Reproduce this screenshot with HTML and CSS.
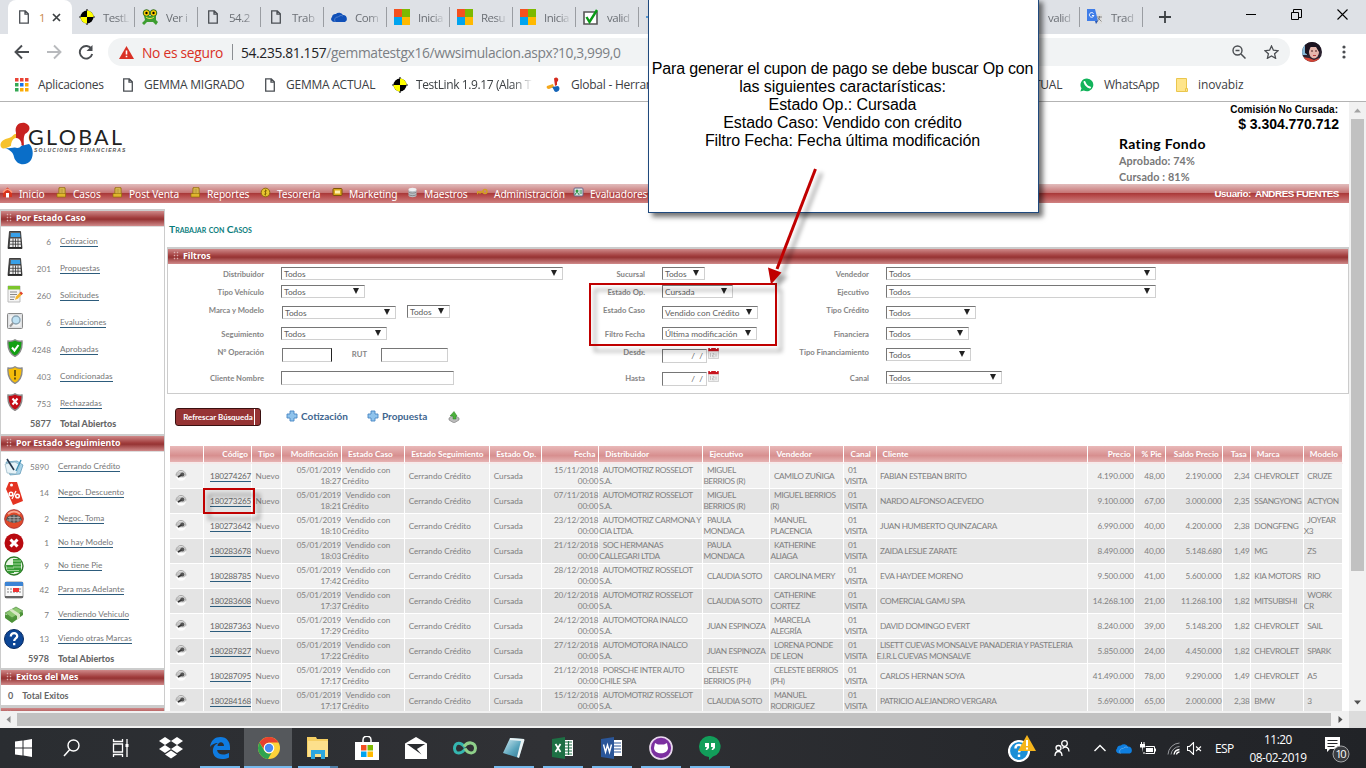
FILE: index.html
```html
<!DOCTYPE html>
<html lang="es">
<head>
<meta charset="utf-8">
<title>Trabajar con Casos</title>
<link rel="stylesheet" href="styles.css">
</head>
<body>
<svg class="defs" width="0" height="0">
<defs>
<linearGradient id="gBtn" x1="0" y1="0" x2="0" y2="1"><stop offset="0" stop-color="#666"/><stop offset="1" stop-color="#222"/></linearGradient>
<linearGradient id="gPad" x1="0" y1="0" x2="1" y2="1"><stop offset="0" stop-color="#d8eef5"/><stop offset=".55" stop-color="#5aa5bd"/><stop offset="1" stop-color="#2b6f8c"/></linearGradient>
<radialGradient id="gRed"><stop offset="0" stop-color="#f33"/><stop offset="1" stop-color="#a00"/></radialGradient>
</defs>
<symbol id="doc" viewBox="0 0 12 14"><path d="M1.7.8h5.6l3 3v9.4H1.7zM7 1v3.2h3.2" fill="none" stroke="#4b4f54" stroke-width="1.3"/></symbol>
<symbol id="target" viewBox="0 0 16 16"><path d="M8 0v16M0 8h16" stroke="#222" stroke-width="1.2"/><circle cx="8" cy="8" r="6.500" fill="#000"/><path d="M8 8V1.500A6.500 6.500 0 0 1 14.500 8zM8 8v6.500A6.500 6.500 0 0 1 1.500 8z" fill="#ff0"/></symbol>
<symbol id="ms" viewBox="0 0 15 15"><path d="M0 0h7.5v7.5H0z" fill="#f4511e"/><path d="M7.5 0H15v7.5H7.5z" fill="#7db900"/><path d="M0 7.5h7.5V15H0z" fill="#00a4ef"/><path d="M7.5 7.5H15V15H7.5z" fill="#ffb900"/></symbol>
<symbol id="cloud" viewBox="0 0 16 11"><path d="M3.4 10.5A3 3 0 0 1 1 5.4 3.6 3.6 0 0 1 4.8 2.6 4.6 4.6 0 0 1 12 3.4a3.6 3.6 0 0 1 3.8 3.9 2.9 2.9 0 0 1-2 3.2z"/><path d="M4.4 10.7C2.5 7.8 4.6 5 7.2 5.6c1-1.6 3-2 4.6-1" fill="none" stroke="#fff" stroke-opacity=".45" stroke-width=".6"/></symbol>
<symbol id="calc" viewBox="0 0 16 18"><path d="M2.500.5h11l1.500 17H1z" fill="url(#gBtn)" stroke="#222" stroke-width=".8"/><path d="M4 2h9l.3 4H3.600z" fill="#38a0e8"/><path d="M3.200 7.500h10.200l.6 8.500H2.600z" fill="#eee"/><path d="M3 10.300h11M3 13.200h11M6 7.500V16M8.500 7.500V16M11 7.500V16" stroke="#333" stroke-width=".8"/></symbol>
<symbol id="shield" viewBox="0 0 16 18"><path d="M8 .8c2 1.4 4.500 1.600 7 1.200.5 6-.8 12-7 15.400C1.800 14 .5 8 1 2c2.500.4 5 .2 7-1.200z" stroke="#8a8a8a" stroke-width="1.400"/></symbol>
<symbol id="sheet" viewBox="0 0 11 11"><path d="M3 .8h6v8H3z" fill="#f3d566" stroke="#94700c"/><path d="M1 6.500h8.500V10H1z" fill="#e0b52c" stroke="#94700c" stroke-width=".7"/><path d="M4.200 3h3.500M4.200 5h3.500" stroke="#84600c" stroke-width=".8"/></symbol>
<symbol id="lens" viewBox="0 0 12 12"><circle cx="6" cy="6.500" r="5.200" fill="#fff" opacity=".9"/><path d="M1 7a5 4.500 0 0 1 10 0l-2 1.500H3z" fill="#c4c4c4"/><path d="M1 6.500a5 5 0 0 1 10 0" fill="none" stroke="#999" stroke-width=".9"/><circle cx="7.300" cy="5.500" r="2" fill="#555"/><path d="M6.500 6 3 8" stroke="#333" stroke-width="1.600"/></symbol>
<symbol id="plus" viewBox="0 0 12 12"><path d="M4 1h4v3h3v4H8v3H4V8H1V4h3z" fill="#8fc3ec" stroke="#4786c4" stroke-width=".9"/></symbol>
<symbol id="cal" viewBox="0 0 11 12"><path d="M.5 2h10v9.500H.5z" fill="#eee" stroke="#bbb" stroke-width=".6"/><path d="M.3 1h10.400v3.200H.3z" fill="#c8141e"/><path d="M2.500 0v2M8.500 0v2" stroke="#fff" stroke-width="1.300"/><path d="M2.500 6v4M4.500 6.500h1.500v1.500H4.500v1.800h2M8 6.500v3.300" fill="none" stroke="#aaa" stroke-width=".6"/></symbol>
<symbol id="gl" viewBox="0 0 36 46"><path d="M9 17c-6 1-10 5-8 9 3 4 8-1 13-2l3-11c-3-1-4 3-8 4z" fill="#f6c22c"/><path d="M16 12C14 4 20 1 25 2c6 2 6 8 0 11-2 4-1 8-1 13l-8-6z" fill="#c8221f"/><path d="M5 27c8 1 14-2 24-4 4 3 5 11 2 16-5 7-15 5-17-3-1-5-4-7-9-9z" fill="#0a6ec8"/><path d="M11 25c0-6 4-10 8-7 4 4 3 9-2 9z" fill="#fff"/></symbol>
</svg>
<div class="screen">
  <header class="tabs">
    <div class="tab active"><svg class="ic12"><use href="#doc"/></svg><span class="orange">1</span><svg width="9" height="9" viewBox="0 0 9 9"><path d="M1 1l7 7M8 1L1 8" stroke="#3c4043" stroke-width="1.700"/></svg></div>
    <div class="tab"><svg class="ic16"><use href="#target"/></svg><span class="tt">TestL</span></div>
    <div class="tab"><svg class="ic16" viewBox="0 0 16 16"><circle cx="4.500" cy="4" r="3.300" fill="#fc0" stroke="#286b22"/><circle cx="11.500" cy="4" r="3.300" fill="#fc0" stroke="#286b22"/><path d="M2 7h12v4l2 2-2 3-3-3H5l-3 3-2-2 3-3z" fill="#3d9d2f"/><circle cx="4.500" cy="4" r="1.200"/><circle cx="11.500" cy="4" r="1.200"/><path d="M4 8c2 2 6 2 8 0" stroke="#efe64b" fill="none"/></svg><span class="tt">Ver i</span></div>
    <div class="tab"><svg class="ic12"><use href="#doc"/></svg><span class="tt">54.2</span></div>
    <div class="tab"><svg class="ic12"><use href="#doc"/></svg><span class="tt">Trab</span></div>
    <div class="tab"><svg class="ic16" viewBox="0 0 16 16" fill="#1050b8"><use href="#cloud" y="2.500" width="16" height="11"/></svg><span class="tt">Com</span></div>
    <div class="tab"><svg class="ic16"><use href="#ms"/></svg><span class="tt">Inicia</span></div>
    <div class="tab"><svg class="ic16"><use href="#ms"/></svg><span class="tt">Resu</span></div>
    <div class="tab"><svg class="ic16"><use href="#ms"/></svg><span class="tt">Inicia</span></div>
    <div class="tab"><svg class="ic16" viewBox="0 0 16 16"><path d="M1 3h13v12H1z" fill="#fff" stroke="#555" stroke-width="1.600"/><path d="M3.500 8l3 5L14 1" fill="none" stroke="#0a9a16" stroke-width="2.400"/></svg><span class="tt">valid</span></div>
    <div class="tab gap"><i></i></div>
    <div class="tab"><span class="tt lone">valid</span></div>
    <div class="tab"><svg class="ic16" viewBox="0 0 16 16"><path d="M6 5h9v10H8z" fill="#ddd"/><path d="M0 0h8l3 12H0z" fill="#3f7de8"/><path d="M8 12h3l-2 3z" fill="#2456b8"/><path d="M6.500 4.500a2.300 2.300 0 1 0 .4 2H5" fill="none" stroke="#fff"/><path d="M10 8h5M12.500 7v1c0 2-1 3.500-2.500 4.500M11 9l3.500 3.500" fill="none" stroke="#777" stroke-width=".8"/></svg><span class="tt">Trad</span></div>
    <svg class="newtab" width="12" height="12"><path d="M6 0v12M0 6h12" stroke="#3c4043" stroke-width="1.800"/></svg>
    <div class="winbtns">
      <svg width="10" height="11"><path d="M0 5.500h10" stroke="#000"/></svg>
      <svg width="11" height="11"><path d="M.5 3.500h7v7h-7zM2.500 3V.5h8v8H8" fill="none" stroke="#000"/></svg>
      <svg width="11" height="11"><path d="M.5.500l10 10M10.500.5l-10 10" stroke="#000" stroke-width="1.100"/></svg>
    </div>
  </header>
  <div class="toolbar">
    <svg width="16" height="16" viewBox="0 0 16 16"><path d="M15 8H2M8 1.500L1.500 8 8 14.500" fill="none" stroke="#4a4d51" stroke-width="1.900"/></svg>
    <svg width="16" height="16" viewBox="0 0 16 16"><path d="M1 8h13M8 1.500L14.500 8 8 14.500" fill="none" stroke="#b8babd" stroke-width="1.900"/></svg>
    <svg width="16" height="16" viewBox="0 0 16 16"><path d="M13.500 5A6.300 6.300 0 1 0 14.200 10" fill="none" stroke="#4a4d51" stroke-width="1.900"/><path d="M14.500 1v6h-6z" fill="#4a4d51"/></svg>
    <div class="omni">
      <svg width="15" height="13" viewBox="0 0 15 13"><path d="M7.500 0L15 13H0z" fill="#d93025"/><path d="M7.500 4.500v4M7.500 9.700v1.600" stroke="#fff" stroke-width="1.600"/></svg>
      <span class="insecure">No es seguro</span><i class="bar"></i><span class="url"><b>54.235.81.157</b>/gemmatestgx16/wwsimulacion.aspx?10,3,999,0</span>
      <svg class="mag" width="14" height="14" viewBox="0 0 14 14"><circle cx="5.500" cy="5.500" r="4.500" fill="none" stroke="#4a4d51" stroke-width="1.400"/><path d="M3.500 5.500h4M9 9l4.500 4.500" stroke="#4a4d51" stroke-width="1.500"/></svg>
      <svg width="15" height="14" viewBox="0 0 15 14"><path d="M7.500 1l1.900 4.200 4.600.5-3.400 3.100 1 4.500-4.100-2.300-4.100 2.300 1-4.500L1 5.700l4.600-.5z" fill="none" stroke="#4a4d51" stroke-width="1.300"/></svg>
    </div>
    <svg class="face" width="20" height="20" viewBox="0 0 20 20"><clipPath id="fc"><circle cx="10" cy="10" r="10"/></clipPath><g clip-path="url(#fc)"><path d="M0 0h20v20H0z" fill="#2b2230"/><path d="M0 0h5v13H0z" fill="#86b8d6"/><ellipse cx="12" cy="10" rx="5" ry="6.500" fill="#e6b6ac"/><path d="M3 0h14l2 8-2 2-3-5-6 0-2 8-3-2z" fill="#1c1420"/><path d="M0 15l7 1 5 2 5-2 1 5H0z" fill="#d34536"/><path d="M9 9h2M13 9h2" stroke="#4a2020"/><path d="M11 13.500h3" stroke="#b83c40"/></g></svg>
    <svg class="dots" width="4" height="14"><g fill="#4a4d51"><circle cx="2" cy="2" r="1.600"/><circle cx="2" cy="7" r="1.600"/><circle cx="2" cy="12" r="1.600"/></g></svg>
  </div>
  <nav class="bookmarks">
    <span><svg width="14" height="14"><g><path d="M0 0h3.500v3.500H0zM5 0h3.500v3.500H5zM10 0h3.500v3.500H10z" fill="#ea4335"/><path d="M0 5h3.500v3.500H0z" fill="#34a853"/><path d="M5 5h3.500v3.500H5z" fill="#1a73e8"/><path d="M10 5h3.500v3.500H10zM5 10h3.500v3.500H5zM10 10h3.500v3.500H10z" fill="#fbab05"/><path d="M0 10h3.500v3.500H0z" fill="#34a853"/></g></svg>Aplicaciones</span>
    <span><svg class="ic12"><use href="#doc"/></svg>GEMMA MIGRADO</span>
    <span><svg class="ic12"><use href="#doc"/></svg>GEMMA ACTUAL</span>
    <span class="fade"><svg class="ic16"><use href="#target"/></svg>TestLink 1.9.17 (Alan T</span>
    <span><svg width="15" height="16" viewBox="0 0 15 16"><path d="M8 1.500c3-3 6 1 3 3.500v3L9 9z" fill="#d52b1e"/><path d="M1 9l6-2 1 3-5 2C1 12 0 10 1 9z" fill="#f5a81c"/><path d="M6 10l6-1c3 2 1 6-2 6-2 0-2-3-4-5z" fill="#1565b8"/></svg>Global - Herramientas</span>
    <span class="right">GEMMA ACTUAL</span>
    <span><svg width="14" height="14" viewBox="0 0 14 14"><path d="M7 .5a6.400 6.400 0 1 1-3.200 12L.4 13.600l1.100-3.300A6.400 6.400 0 0 1 7 .5z" fill="#12b35b"/><path d="M4.500 4c1 3 2.500 4.800 5.500 5.500" stroke="#fff" stroke-width="2" fill="none" stroke-linecap="round"/></svg>WhatsApp</span>
    <span class="ino"><svg width="12" height="14"><path d="M.5.5h10v13H.5z" fill="#ffe58a" stroke="#eac64d"/><path d="M9.500 10.500h2v3h-2z" fill="#ffe58a" stroke="#eac64d"/></svg>inovabiz</span>
  </nav>
  <div class="view">
    <main class="page">
      <div class="banner">
        <div class="logo"><svg width="36" height="46"><use href="#gl"/></svg><div><div class="brand">GLOBAL</div><div class="sub">SOLUCIONES FINANCIERAS</div></div></div>
        <div class="figures"><div class="com">Comisión No Cursada:</div><div class="amt">$ 3.304.770.712</div><div class="rating"><h2>Rating Fondo</h2><p>Aprobado: 74%</p><p>Cursado : 81%</p></div></div>
      </div>
      <nav class="menu">
        <span><svg class="mi" viewBox="0 0 11 11"><path d="M1 5l4.500-4.500L10 5v5H1z" fill="#d8341c"/><path d="M1 5.500Q5.500-1 10 5.500" stroke="#ff9c80" stroke-width="1.500" fill="none"/><path d="M4 6h3v4.500H4z" fill="#fff"/></svg>Inicio</span>
        <span><svg class="mi"><use href="#sheet"/></svg>Casos</span>
        <span><svg class="mi"><use href="#sheet"/></svg>Post Venta</span>
        <span><svg class="mi"><use href="#sheet"/></svg>Reportes</span>
        <span><svg class="mi" viewBox="0 0 11 11"><circle cx="5.500" cy="5.500" r="4.300" fill="#e7c52f" stroke="#8d6c10"/><path d="M7 4c-2-1.200-3 .8-1.500 1.500S5.500 8 4 7M5.500 2.500v6" fill="none" stroke="#7a5c08" stroke-width=".8"/></svg>Tesorería</span>
        <span><svg class="mi" viewBox="0 0 11 11"><rect x="1" y="1.500" width="9" height="7" rx="1" fill="#d9a91c" stroke="#7c5508"/><path d="M3 3.500h5v3H3z" fill="#fff1b0"/></svg>Marketing</span>
        <span><svg class="mi" viewBox="0 0 11 11"><path d="M1.500 2.500v6c0 2.300 8 2.300 8 0v-6z" fill="#b9bfc4"/><ellipse cx="5.500" cy="2.500" rx="4" ry="1.700" fill="#eef0f2"/><path d="M1.500 5c1 1.500 7 1.500 8 0M1.500 7.500c1 1.500 7 1.500 8 0" stroke="#666" fill="none" stroke-width=".6"/></svg>Maestros</span>
        <span><svg class="mi" viewBox="0 0 11 11"><circle cx="8" cy="4.500" r="2" fill="none" stroke="#d2a020" stroke-width="1.500"/><path d="M6 5H.5v2.200M3 5v1.800" stroke="#d2a020" stroke-width="1.400" fill="none"/></svg>Administración</span>
        <span><svg class="mi" viewBox="0 0 11 11"><rect x="1" y="1" width="9" height="8" rx="1" fill="#dce6e4" stroke="#668"/><circle cx="4" cy="4" r="1.500" fill="#2e9c40"/><path d="M2 8c0-3 4-3 4 0M6.500 4H9M6.500 6H9" stroke="#2e8c50" fill="none"/></svg>Evaluadores</span>
        <b>Usuario:&nbsp; ANDRES FUENTES</b>
      </nav>
      <div class="cols">
        <aside>
          <section class="box"><h3>Por Estado Caso</h3>
            <ul class="caso">
              <li><svg class="s"><use href="#calc"/></svg><em>6</em><a>Cotizacion</a></li>
              <li><svg class="s"><use href="#calc"/></svg><em>201</em><a>Propuestas</a></li>
              <li><svg class="s" viewBox="0 0 16 18"><path d="M1 1h12v16H1z" fill="#f4f4f4" stroke="#bbb"/><path d="M1 1h12v3.500H1z" fill="#7cc52c"/><path d="M3 7h7M3 9.500h7M3 12h5M3 14.500h4" stroke="#8a8a8a"/><path d="M8 15l1-3.500 4-4 2 2-4 4z" fill="#f4b52c"/><path d="M12.500 8l1.500-1.500 2 2-1.500 1.500z" fill="#e0402c"/></svg><em>260</em><a>Solicitudes</a></li>
              <li><svg class="s" viewBox="0 0 16 18"><rect x=".5" y="1.500" width="15" height="15" rx="1" fill="#dfe1e3" stroke="#888"/><path d="M2.500 3.500h11v11h-11z" fill="#f3f3f3"/><circle cx="9" cy="8" r="4" fill="#bfe2f4" stroke="#8aa4b4" stroke-width="1.400"/><path d="M6 11l-3 3.500" stroke="#999" stroke-width="2"/></svg><em>6</em><a>Evaluaciones</a></li>
              <li><svg class="s" fill="#12a012"><use href="#shield"/><path d="M5 8.500l2.500 3L11.500 6" fill="none" stroke="#fff" stroke-width="2"/></svg><em>4248</em><a>Aprobadas</a></li>
              <li><svg class="s" fill="#f5bd0a"><use href="#shield"/><path d="M8 4v6M8 11.500v2" stroke="#5a4508" stroke-width="1.700"/></svg><em>403</em><a>Condicionadas</a></li>
              <li><svg class="s" fill="#c40c16"><use href="#shield"/><path d="M5.500 5.500l5 6M10.500 5.500l-5 6" stroke="#fff" stroke-width="2"/></svg><em>753</em><a>Rechazadas</a></li>
              <li class="total"><i></i><em>5877</em><b>Total Abiertos</b></li>
            </ul>
          </section>
          <section class="box"><h3>Por Estado Seguimiento</h3>
            <ul class="seg">
              <li style="height:29px"><svg viewBox="0 0 20 20"><path d="M2 5l11-1 6 4-3 9-10 1z" fill="#a8d4ea" stroke="#5c93b0" stroke-width=".7"/><path d="M1 7l10-2 5 3-4 9-9-1z" fill="#e7f3f8" stroke="#86a9ba" stroke-width=".6"/><path d="M3 2l7 11" stroke="#24354a" stroke-width="1.600"/><path d="M12 14l5-11" stroke="#3f8fb5" stroke-width="1.400"/></svg><em>5890</em><a>Cerrando Crédito</a></li>
              <li style="height:24px"><svg class="big" viewBox="0 0 20 24"><path d="M2 8l3-7 8 0 6 19-10 4z" fill="#e43422"/><circle cx="7.500" cy="4" r="1.500" fill="#fff"/><path d="M8 18l4-8" stroke="#fff" stroke-width="1.300"/><circle cx="7" cy="13" r="1.800" fill="none" stroke="#fff" stroke-width="1.500"/><circle cx="13.500" cy="15" r="1.800" fill="none" stroke="#fff" stroke-width="1.500"/></svg><em>14</em><a>Negoc. Descuento</a></li>
              <li style="height:27px"><svg viewBox="0 0 20 20"><circle cx="10" cy="10" r="9.300" fill="#e14a2a" stroke="#a33"/><path d="M3 8q7-5 14 0l1 3q-8 6-16 0z" fill="#555"/><path d="M4 8.500h12M3 11h14M6 7v6M10 6v8M14 7v6" stroke="#bbb" stroke-width=".7"/><path d="M4 5q6-5 12 0" stroke="#f8a894" stroke-width="2" fill="none"/></svg><em>2</em><a>Negoc. Toma</a></li>
              <li style="height:22px"><svg viewBox="0 0 20 20"><circle cx="10" cy="10" r="9.500" fill="#b80a10"/><path d="M6.500 6.500l7 7M13.500 6.500l-7 7" stroke="#fff" stroke-width="3"/></svg><em>1</em><a>No hay Modelo</a></li>
              <li style="height:24px"><svg viewBox="0 0 20 20"><circle cx="10" cy="10" r="9" fill="#eaf5e6" stroke="#2e7a28" stroke-width="1.400"/><path d="M9 3h8v13H9zM2 9h8v8H4z" fill="#359b35"/><path d="M9 5h8M9 8h8M9 11h8M3 12h7M3 14.500h12" stroke="#bfe3b4" stroke-width=".8"/></svg><em>9</em><a>No tiene Pie</a></li>
              <li style="height:24px"><svg viewBox="0 0 20 20"><rect x="1" y="2" width="18" height="16" rx="1.500" fill="#fafafa" stroke="#999"/><path d="M1 2h18v4H1z" fill="#3c84d4"/><path d="M3 9h14M3 12h14" stroke="#aaa" stroke-width="1.400" stroke-dasharray="2 1"/><path d="M9 8h6v4H9z" fill="#e33"/><path d="M1 16h18v2H1z" fill="#666"/></svg><em>42</em><a>Para mas Adelante</a></li>
              <li style="height:25px"><svg viewBox="0 0 20 20"><path d="M1 11l12-7 6 4-12 9z" fill="#5aa045"/><path d="M1 8l11-6 7 4-11 7z" fill="#8cc870" stroke="#3f7d30" stroke-width=".6"/><path d="M1 9v4l7 5 11-8V7L8 14z" fill="#4c9238"/><path d="M5 5l8 6v4l3-2V9L8 4z" fill="#d8e6c4"/></svg><em>7</em><a>Vendiendo Vehiculo</a></li>
              <li style="height:23px"><svg viewBox="0 0 20 20"><circle cx="10" cy="10" r="9.500" fill="#0c4696" stroke="#082a60"/><path d="M6.800 7.500c0-4.600 6.700-4.200 6.400-.2-.2 2.200-3 2-3 4.700M10.200 14v2.300" fill="none" stroke="#fff" stroke-width="2.300"/></svg><em>13</em><a>Viendo otras Marcas</a></li>
              <li class="total"><i></i><em>5978</em><b>Total Abiertos</b></li>
            </ul>
          </section>
          <section class="box"><h3>Exitos del Mes</h3><p class="exit"><b>0</b><b>Total Exitos</b></p></section>
          <section class="box last"><h3></h3></section>
        </aside>
        <div class="content">
          <h1>Trabajar con Casos</h1>
          <section class="filters"><h3>Filtros</h3>
            <div class="fgrid">
              <div class="fcol c1">
                <label>Distribuidor</label><div><span class="sel" style="width:282px">Todos</span></div>
                <label>Tipo Vehículo</label><div><span class="sel" style="width:84px">Todos</span></div>
                <label class="up">Marca y Modelo</label><div><span class="sel nudge" style="width:114px">Todos</span><span class="sel second" style="width:43px">Todos</span></div>
                <label>Seguimiento</label><div><span class="sel" style="width:106px">Todos</span></div>
                <label class="up">Nº Operación</label><div><span class="inp nudge caret" style="width:50px"></span><label class="rut">RUT</label><span class="inp" style="width:67px"></span></div>
                <label>Cliente Nombre</label><div><span class="inp" style="width:173px"></span></div>
              </div>
              <div class="fcol c2">
                <label>Sucursal</label><div><span class="sel" style="width:43px">Todos</span></div>
                <label>Estado Op.</label><div><span class="sel" style="width:71px">Cursada</span></div>
                <label class="up">Estado Caso</label><div><span class="sel" style="width:96px">Vendido con Crédito</span></div>
                <label>Filtro Fecha</label><div><span class="sel" style="width:95px">Última modificación</span></div>
                <label class="up">Desde</label><div><span class="inp date">/&nbsp; /</span><svg class="cal"><use href="#cal"/></svg></div>
                <label>Hasta</label><div><span class="inp date">/&nbsp; /</span><svg class="cal"><use href="#cal"/></svg></div>
              </div>
              <div class="fcol c3">
                <label>Vendedor</label><div><span class="sel" style="width:270px">Todos</span></div>
                <label>Ejecutivo</label><div><span class="sel" style="width:270px">Todos</span></div>
                <label class="up">Tipo Crédito</label><div><span class="sel" style="width:90px">Todos</span></div>
                <label>Financiera</label><div><span class="sel" style="width:83px">Todos</span></div>
                <label class="up">Tipo Financiamiento</label><div><span class="sel" style="width:85px">Todos</span></div>
                <label>Canal</label><div><span class="sel" style="width:116px">Todos</span></div>
              </div>
            </div>
          </section>
          <div class="actions"><button>Refrescar Búsqueda</button><a class="act"><svg class="ic12"><use href="#plus"/></svg>Cotización</a><a class="act a2"><svg class="ic12"><use href="#plus"/></svg>Propuesta</a><svg width="12" height="12" viewBox="0 0 12 12"><path d="M1 7l5-3 5 3v2l-5 3-5-3z" fill="#bbb" stroke="#777" stroke-width=".6"/><path d="M5 8V5H2l4-4.500L9 5H8v3z" fill="#4cb23c" stroke="#2a8020" stroke-width=".5"/></svg></div>
          <table>
            <colgroup><col style="width:34px"><col style="width:48px"><col style="width:30px"><col style="width:60px"><col style="width:63px"><col style="width:85px"><col style="width:52px"><col style="width:57px"><col style="width:104px"><col style="width:67px"><col style="width:74px"><col style="width:32px"><col style="width:211px"><col style="width:47px"><col style="width:31px"><col style="width:57px"><col style="width:28px"><col style="width:53px"><col style="width:39px"></colgroup>
            <thead><tr><th></th><th class="r">Código</th><th>Tipo</th><th class="r">Modificación</th><th>Estado Caso</th><th>Estado Seguimiento</th><th>Estado Op.</th><th class="r">Fecha</th><th>Distribuidor</th><th>Ejecutivo</th><th>Vendedor</th><th>Canal</th><th>Cliente</th><th class="r">Precio</th><th class="r">% Pie</th><th class="r">Saldo Precio</th><th class="r">Tasa</th><th>Marca</th><th>Modelo</th></tr></thead>
            <tbody>
<tr><td><svg class="lens"><use href="#lens"/></svg></td><td class="r"><a>180274267</a></td><td>Nuevo</td><td class="r">05/01/2019<br>18:27</td><td>Vendido con<br>Crédito</td><td>Cerrando Crédito</td><td>Cursada</td><td class="r">15/11/2018<br>00:00</td><td>AUTOMOTRIZ ROSSELOT<br>S.A.</td><td>MIGUEL<br>BERRIOS (R)</td><td>CAMILO ZUÑIGA</td><td>01<br>VISITA</td><td>FABIAN ESTEBAN BRITO</td><td class="r">4.190.000</td><td class="r">48,00</td><td class="r">2.190.000</td><td class="r">2,34</td><td>CHEVROLET</td><td>CRUZE</td></tr>
<tr><td><svg class="lens"><use href="#lens"/></svg></td><td class="r"><a>180273265</a></td><td>Nuevo</td><td class="r">05/01/2019<br>18:21</td><td>Vendido con<br>Crédito</td><td>Cerrando Crédito</td><td>Cursada</td><td class="r">07/11/2018<br>00:00</td><td>AUTOMOTRIZ ROSSELOT<br>S.A.</td><td>MIGUEL<br>BERRIOS (R)</td><td>MIGUEL BERRIOS<br>(R)</td><td>01<br>VISITA</td><td>NARDO ALFONSO ACEVEDO</td><td class="r">9.100.000</td><td class="r">67,00</td><td class="r">3.000.000</td><td class="r">2,35</td><td>SSANGYONG</td><td>ACTYON</td></tr>
<tr><td><svg class="lens"><use href="#lens"/></svg></td><td class="r"><a>180273642</a></td><td>Nuevo</td><td class="r">05/01/2019<br>18:10</td><td>Vendido con<br>Crédito</td><td>Cerrando Crédito</td><td>Cursada</td><td class="r">23/12/2018<br>00:00</td><td>AUTOMOTRIZ CARMONA Y<br>CIA LTDA.</td><td>PAULA<br>MONDACA</td><td>MANUEL<br>PLACENCIA</td><td>01<br>VISITA</td><td>JUAN HUMBERTO QUINZACARA</td><td class="r">6.990.000</td><td class="r">40,00</td><td class="r">4.200.000</td><td class="r">2,38</td><td>DONGFENG</td><td>JOYEAR<br>X3</td></tr>
<tr><td><svg class="lens"><use href="#lens"/></svg></td><td class="r"><a>180283678</a></td><td>Nuevo</td><td class="r">05/01/2019<br>18:03</td><td>Vendido con<br>Crédito</td><td>Cerrando Crédito</td><td>Cursada</td><td class="r">21/12/2018<br>00:00</td><td>SOC HERMANAS<br>CALLEGARI LTDA</td><td>PAULA<br>MONDACA</td><td>KATHERINE<br>ALIAGA</td><td>01<br>VISITA</td><td>ZAIDA LESLIE ZARATE</td><td class="r">8.490.000</td><td class="r">40,00</td><td class="r">5.148.680</td><td class="r">1,49</td><td>MG</td><td>ZS</td></tr>
<tr><td><svg class="lens"><use href="#lens"/></svg></td><td class="r"><a>180288785</a></td><td>Nuevo</td><td class="r">05/01/2019<br>17:42</td><td>Vendido con<br>Crédito</td><td>Cerrando Crédito</td><td>Cursada</td><td class="r">28/12/2018<br>00:00</td><td>AUTOMOTRIZ ROSSELOT<br>S.A.</td><td>CLAUDIA SOTO</td><td>CAROLINA MERY</td><td>01<br>VISITA</td><td>EVA HAYDEE MORENO</td><td class="r">9.500.000</td><td class="r">41,00</td><td class="r">5.600.000</td><td class="r">1,82</td><td>KIA MOTORS</td><td>RIO</td></tr>
<tr><td><svg class="lens"><use href="#lens"/></svg></td><td class="r"><a>180283608</a></td><td>Nuevo</td><td class="r">05/01/2019<br>17:37</td><td>Vendido con<br>Crédito</td><td>Cerrando Crédito</td><td>Cursada</td><td class="r">20/12/2018<br>00:00</td><td>AUTOMOTRIZ ROSSELOT<br>S.A.</td><td>CLAUDIA SOTO</td><td>CATHERINE<br>CORTEZ</td><td>01<br>VISITA</td><td>COMERCIAL GAMU SPA</td><td class="r">14.268.100</td><td class="r">21,00</td><td class="r">11.268.100</td><td class="r">1,82</td><td>MITSUBISHI</td><td>WORK<br>CR</td></tr>
<tr><td><svg class="lens"><use href="#lens"/></svg></td><td class="r"><a>180287363</a></td><td>Nuevo</td><td class="r">05/01/2019<br>17:29</td><td>Vendido con<br>Crédito</td><td>Cerrando Crédito</td><td>Cursada</td><td class="r">24/12/2018<br>00:00</td><td>AUTOMOTORA INALCO<br>S.A.</td><td>JUAN ESPINOZA</td><td>MARCELA<br>ALEGRÍA</td><td>01<br>VISITA</td><td>DAVID DOMINGO EVERT</td><td class="r">8.240.000</td><td class="r">39,00</td><td class="r">5.148.200</td><td class="r">1,82</td><td>CHEVROLET</td><td>SAIL</td></tr>
<tr><td><svg class="lens"><use href="#lens"/></svg></td><td class="r"><a>180287827</a></td><td>Nuevo</td><td class="r">05/01/2019<br>17:22</td><td>Vendido con<br>Crédito</td><td>Cerrando Crédito</td><td>Cursada</td><td class="r">27/12/2018<br>00:00</td><td>AUTOMOTORA INALCO<br>S.A.</td><td>JUAN ESPINOZA</td><td>LORENA PONDE<br>DE LEON</td><td>01<br>VISITA</td><td>LISETT CUEVAS MONSALVE PANADERIA Y PASTELERIA<br>E.I.R.L CUEVAS MONSALVE</td><td class="r">5.850.000</td><td class="r">24,00</td><td class="r">4.450.000</td><td class="r">1,82</td><td>CHEVROLET</td><td>SPARK</td></tr>
<tr><td><svg class="lens"><use href="#lens"/></svg></td><td class="r"><a>180287095</a></td><td>Nuevo</td><td class="r">05/01/2019<br>17:17</td><td>Vendido con<br>Crédito</td><td>Cerrando Crédito</td><td>Cursada</td><td class="r">21/12/2018<br>00:00</td><td>PORSCHE INTER AUTO<br>CHILE SPA</td><td>CELESTE<br>BERRIOS (PH)</td><td>CELESTE BERRIOS<br>(PH)</td><td>01<br>VISITA</td><td>CARLOS HERNAN SOYA</td><td class="r">41.490.000</td><td class="r">78,00</td><td class="r">9.290.000</td><td class="r">1,49</td><td>CHEVROLET</td><td>A5</td></tr>
<tr><td><svg class="lens"><use href="#lens"/></svg></td><td class="r"><a>180284168</a></td><td>Nuevo</td><td class="r">05/01/2019<br>17:17</td><td>Vendido con<br>Crédito</td><td>Cerrando Crédito</td><td>Cursada</td><td class="r">15/12/2018<br>00:00</td><td>AUTOMOTRIZ ROSSELOT<br>S.A.</td><td>CLAUDIA SOTO</td><td>MANUEL<br>RODRIGUEZ</td><td>01<br>VISITA</td><td>PATRICIO ALEJANDRO VERGARA</td><td class="r">5.690.000</td><td class="r">65,00</td><td class="r">2.000.000</td><td class="r">2,38</td><td>BMW</td><td>3</td></tr>
            </tbody>
          </table>
        </div>
      </div>
    </main>
    <div class="vscroll"><svg width="17" height="17"><path d="M5 10.500h7l-3.500-4z" fill="#a3a3a3"/></svg><i></i><svg width="17" height="17"><path d="M5 6.500h7l-3.500 4z" fill="#505050"/></svg></div>
  </div>
  <div class="hscroll"><svg width="17" height="17"><path d="M10.500 5v7l-4-3.500z" fill="#8a8a8a"/></svg><i></i><svg width="17" height="17"><path d="M6.500 5v7l4-3.500z" fill="#505050"/></svg><u></u></div>
  <footer class="taskbar">
    <span class="w48"><svg width="18" height="18"><path d="M0 2.500l7.500-1V8.500H0zM8.500 1.400L17 0v8.500H8.500zM0 9.500h7.500v7L0 15.500zM8.500 9.500H17V18l-8.500-1.400z" fill="#fff"/></svg></span>
    <span class="w48"><svg width="18" height="18"><circle cx="10.500" cy="6.500" r="5.500" fill="none" stroke="#fff" stroke-width="1.400"/><path d="M6.800 10.500L1 17" stroke="#fff" stroke-width="1.500"/></svg></span>
    <span class="w51"><svg width="18" height="18"><path d="M1.500 5h9v8h-9zM1.500 0v2.500h9V0M1.500 18v-2.500h9V18M15 0v18" fill="none" stroke="#fff" stroke-width="1.300"/><path d="M13.500 5h3v3h-3z" fill="#fff"/></svg></span>
    <span><svg width="24" height="22"><path d="M6 0l6 4-6 4-6-4zM18 0l6 4-6 4-6-4zM6 8l6 4-6 4-6-4zM18 8l6 4-6 4-6-4zM12 13.500l6 4-6 4-6-4z" fill="#fff"/></svg></span>
    <span class="run"><svg width="20" height="22" viewBox="0 0 20 22"><path d="M0 10C1 3 5 0 10.500 0 17 0 20 5 20 10v3H7c.5 3 3 4.500 6 4.500 2.500 0 4.500-.7 6-1.500v4.500c-2 1-4.500 1.500-7 1.500C5 22 2 17 3 12c.6-2.700 2.500-5 5-6-4-.2-7 2.500-8 4zm7.500-1H14c0-5-6-5-6.500 0z" fill="#0f7be0"/></svg></span>
    <span class="run on"><svg width="22" height="22" viewBox="0 0 22 22"><circle cx="11" cy="11" r="11" fill="#fdd23a"/><path d="M1.500 5.500A11 11 0 0 1 20.500 5.500H11a5.500 5.500 0 0 0-5 7z" fill="#e8402f"/><path d="M1.500 5.500l5 8.500a5.500 5.500 0 0 0 7 2L10 22A11 11 0 0 1 1.500 5.500z" fill="#2fa350"/><circle cx="11" cy="11" r="5.300" fill="#fff"/><circle cx="11" cy="11" r="4.200" fill="#4a8af4"/></svg></span>
    <span class="run split"><svg width="22" height="22"><path d="M0 0h9l1 2h11v18H0z" fill="#f6cf63"/><path d="M1 4h20v16H1z" fill="#fde08c"/><path d="M4 22v-9h14v9h-4v-5H8v5z" fill="#2da7e0"/></svg></span>
    <span><svg width="24" height="24"><path d="M8 7V4c0-5 8-5 8 0v3" fill="none" stroke="#fff" stroke-width="1.500"/><path d="M0 6h24v18H0z" fill="#fff"/><path d="M6 9h5.500v5.500H6z" fill="#f25022"/><path d="M12.500 9H18v5.500h-5.500z" fill="#7fba00"/><path d="M6 15.500h5.500V21H6z" fill="#00a4ef"/><path d="M12.500 15.500H18V21h-5.500z" fill="#ffb900"/></svg></span>
    <span><svg width="24" height="22" viewBox="0 0 24 24"><path d="M0 7L12 0l12 7v17H0z" fill="#fff"/><path d="M2 7.500h20L13 13l5 6z" fill="#2b2d31"/></svg></span>
    <span><svg width="24" height="14"><path d="M12.500 7.500C9 13 2 14 1.500 7.500 2 0 8.500 1 12 6.500" fill="none" stroke="#35b6b0" stroke-width="3"/><path d="M11 5.500C15 0 22 1 22.500 7c-.5 6.500-7 6.500-10.500.5" fill="none" stroke="#8fd08a" stroke-width="3"/></svg></span>
    <span class="run"><svg width="22" height="22"><path d="M7 1l14 1-5 19L0 16z" fill="url(#gPad)"/><path d="M7 1l14 1 .5 1L16 21l-2-1 4-16-11-1z" fill="#e9f2f3"/></svg></span>
    <span class="run"><svg width="22" height="22" viewBox="0 0 22 22"><path d="M12 3h9v16h-9z" fill="#fff"/><path d="M13 5h7M13 8h7M13 11h7M13 14h7M13 17h7M16.500 4v14" stroke="#1d7044" stroke-width="1.200"/><path d="M0 2l13-2v22L0 20z" fill="#1d7044"/><path d="M3.500 7l5 8M8.500 7l-5 8" stroke="#fff" stroke-width="1.700"/></svg></span>
    <span class="run"><svg width="22" height="22" viewBox="0 0 22 22"><path d="M12 3h9v16h-9z" fill="#fff"/><path d="M13 6h7M13 9h7M13 12h7M13 15h7" stroke="#2a5699" stroke-width="1.200"/><path d="M0 2l13-2v22L0 20z" fill="#2a5699"/><path d="M2.500 7.500L4.500 15l2-7 2 7 2-7.500" fill="none" stroke="#fff" stroke-width="1.400"/></svg></span>
    <span class="run"><svg width="24" height="24"><circle cx="12" cy="12" r="11" fill="#7b2fa0" stroke="#e9d9ee" stroke-width="1.700"/><path d="M6 7l3 1.500h6L18 7l1 5c0 7-14 7-14 0z" fill="#fff"/></svg></span>
    <span class="run"><svg width="22" height="24"><path d="M11 0a10.500 10.500 0 0 1 3 20.600L10 24v-3A10.500 10.500 0 0 1 11 0z" fill="#129e5a"/><path d="M6 7h4v5l-2 2H6.500L8 11H6zM12 7h4v5l-2 2h-1.500L14 11h-2z" fill="#fff"/></svg></span>
    <div class="tray">
      <span style="width:46px"><svg width="28" height="28"><circle cx="11" cy="17" r="10" fill="#1b8fd6" stroke="#fff" stroke-width="2.200"/><path d="M7.500 14.500c0-5 7-4.500 6.500-.5-.3 2-3 2-3 4.500M11 20.500V23" fill="none" stroke="#fff" stroke-width="2.400"/><path d="M19 1l9 16H10z" fill="#f6b51c"/><path d="M19 6v6M19 13.500v2" stroke="#fff" stroke-width="2"/></svg></span>
      <span style="width:40px"><svg width="16" height="17"><g fill="none" stroke="#fff" stroke-width="1.300"><circle cx="4.500" cy="8" r="2.500"/><path d="M1 16c0-6 7-6 7 0"/><circle cx="10.500" cy="3.500" r="2.800"/><path d="M8.500 8.500c3-3 6.500-1 6.500 3"/></g></svg></span>
      <span style="width:22px"><svg width="12" height="8"><path d="M.5 7L6 1.500 11.500 7" fill="none" stroke="#fff" stroke-width="1.400"/></svg></span>
      <span style="width:24px"><svg width="16" height="11" fill="#0f7fe0"><use href="#cloud"/></svg></span>
      <span style="width:27px"><svg width="16" height="13"><path d="M5.500 4.500h9v7h-9" fill="none" stroke="#fff"/><path d="M6 6h7v4H6zM14.500 6.500H16v3h-1.500zM0 2h5v3.500H0zM1 0h1v2H1zM3.500 0h1v2h-1zM2 5h1v6.500h2v-1H3z" fill="#fff"/></svg></span>
      <span style="width:20px"><svg width="13" height="13"><g fill="none" stroke="#9a9ca0"><path d="M1 12.500A12 12 0 0 1 12.500 1M4 12.500A9 9 0 0 1 12.500 4.500"/><path d="M7 12.500A6 6 0 0 1 12.500 7.500M9.500 12.500a3 3 0 0 1 3-2.500" stroke="#fff" stroke-width="1.300"/></g></svg></span>
      <span style="width:28px"><svg width="15" height="13"><path d="M.5 4.500h2l4-4v12l-4-4h-2zM9 4.500l5 4.500M14 4.500L9 9" fill="none" stroke="#fff" stroke-width="1.100"/></svg></span>
      <span class="esp">ESP</span>
      <div class="clock"><div>11:20</div><div>08-02-2019</div></div>
      <svg class="notif" width="26" height="27"><path d="M1 0h15v12H6l-3 3v-3H1z" fill="#fff"/><path d="M3.500 3.500h10M3.500 6.500h10M3.500 9.500h7" stroke="#25272b" stroke-width="1.200"/><circle cx="17" cy="17" r="8" fill="#3a3c40" stroke="#a5a6a8"/><text x="11.500" y="21" font-family="Open Sans, sans-serif" font-size="11" fill="#fff" textLength="11">10</text></svg>
    </div>
  </footer>

  <div class="note"><p><span>Para generar el cupon de pago se debe buscar Op con</span><br>las siguientes caractarísticas:<br>Estado Op.: Cursada<br>Estado Caso: Vendido con crédito<br>Filtro Fecha: Fecha última modificación</p></div>
  <div class="mark m1"></div>
  <div class="mark m2"></div>
  <svg class="arrow" width="80" height="130"><path d="M55.500 9L17 109" stroke="#c00000" stroke-width="3"/><path d="M8 107.500l13.500 5-10.500 12z" fill="#c00000"/></svg>
</div>
</body>
</html>
```
FILE: styles.css
```css
* { box-sizing: border-box; }
body, p, h1, h2, h3, ul { margin: 0; padding: 0; }
body { overflow: hidden; background: #fff; font-family: Lato, sans-serif; }
.defs { display: block; width: 0; height: 0; }
svg { flex: none; display: block; }
.screen { width: 1366px; height: 768px; display: flex; flex-direction: column; position: relative; overflow: hidden; }
.ic12 { width: 12px; height: 14px; }
.ic16 { width: 16px; height: 16px; }

/* browser chrome */
.tabs { height: 34px; background: #dee1e6; display: flex; align-items: center; padding-left: 8px; font: 11.500px "Open Sans", sans-serif; color: #6b6f75; letter-spacing: -.5px; flex: none; }
.tab { width: 63px; height: 20px; display: flex; align-items: center; gap: 8px; padding-left: 7px; border-right: 1px solid #9a9da2; white-space: nowrap; flex: none; }
.tab .ic12 { margin: 0 2px; }
.tab .tt { width: 28px; -webkit-mask-image: linear-gradient(90deg, #000 50%, rgba(0,0,0,.15) 90%); mask-image: linear-gradient(90deg, #000 50%, rgba(0,0,0,.15) 90%); }
.tab .lone { margin-left: 24px; }
.tab.active { width: 64px; height: 34px; background: #fff; border: 0; border-radius: 8px 8px 0 0; padding-left: 8px; gap: 7px; }
.tab.gap { width: 378px; }
.tab.gap i { width: 3px; height: 2px; background: #5b9bd5; }
.orange { color: #c98a4a; width: 6px; }
.newtab { margin-left: 16px; }
.winbtns { margin-left: auto; margin-right: 18px; display: flex; gap: 35px; margin-top: -5px; }
.toolbar { height: 34px; display: flex; align-items: center; padding: 2px 0 0 14px; gap: 16px; flex: none; }
.omni { width: 1182px; height: 28px; margin-left: -2px; border-radius: 14px; background: #f1f3f4; display: flex; align-items: center; padding: 0 11px; font: 13.800px "Open Sans", sans-serif; }
.insecure { color: #d93025; margin-left: 8px; width: 82px; letter-spacing: -.28px; white-space: nowrap; }
.omni .bar { width: 1px; height: 16px; background: #8b8e92; margin: 0 8px 0 8px; }
.url { color: #7b7f84; letter-spacing: -.35px; white-space: nowrap; }
.url b { font-weight: 400; color: #202124; }
.mag { margin: 0 18px 0 auto; }
.face { margin-left: -4px; }
.dots { margin-left: -4px; }
.toolbar .dots { margin-left: 4px; }
.bookmarks { height: 34px; border-bottom: 1px solid #b3b3b3; display: grid; grid-template-columns: 107px 142px 128px 154px 427px 107px 96px 100px; padding-left: 15px; align-items: center; font: 12px "Open Sans", sans-serif; color: #3c4043; letter-spacing: -.24px; flex: none; }
.bookmarks span { display: flex; align-items: center; gap: 10px; white-space: nowrap; }
.bookmarks span:first-child { gap: 9px; letter-spacing: -.3px; }
.bookmarks .fade { width: 146px; gap: 8px; letter-spacing: -.4px; -webkit-mask-image: linear-gradient(90deg, #000 82%, rgba(0,0,0,.1) 95%); mask-image: linear-gradient(90deg, #000 82%, rgba(0,0,0,.1) 95%); }
.bookmarks .ino { letter-spacing: -.1px; }

/* page viewport */
.view { height: 609px; display: flex; flex: none; overflow: hidden; }
.page { width: 1349px; flex: none; overflow: hidden; }
.banner { height: 82px; display: flex; justify-content: space-between; }
.logo { display: flex; padding-top: 19px; }
.logo > svg { margin-right: -8px; }
.brand { font-size: 21.500px; line-height: 22px; margin-top: 5px; letter-spacing: 2.300px; color: #222; }
.sub { font: italic bold 5px/6px "Liberation Sans", sans-serif; letter-spacing: 1.080px; color: #555; margin: -1px 0 0 6px; white-space: nowrap; }
.figures { width: 230px; font-family: "Liberation Sans", sans-serif; font-weight: 700; color: #000; }
.com { font-size: 10px; line-height: 12px; margin-top: 2px; text-align: right; padding-right: 11px; }
.amt { font-size: 14px; line-height: 16px; text-align: right; padding-right: 10px; letter-spacing: -.03px; }
.rating { font-family: Lato, sans-serif; margin-top: 3px; color: #777; }
.rating h2 { font-size: 14px; line-height: 18px; color: #000; letter-spacing: .35px; }
.rating p { font-size: 10.800px; line-height: 15px; letter-spacing: .12px; }
.rating p + p { padding-top: 1px; }
.menu { height: 19px; display: grid; grid-template-columns: 54px 56px 78px 70px 72px 75px 70px 96px 80px 1fr; padding-left: 2px; background: linear-gradient(#e2bdbd, #c77676 45%, #a93a3a 50%, #b54747 60%, #cf8181); font: 10.200px/21px "Noto Sans", sans-serif; color: #fff; white-space: nowrap; }
.menu span { display: flex; gap: 6px; letter-spacing: -.08px; }
.mi { width: 11px; height: 11px; margin-top: 3px; }
.menu b { text-align: right; padding-right: 10px; font: bold 9.800px/20px "Liberation Sans", sans-serif; letter-spacing: -.42px; }
.cols { display: flex; padding-top: 6px; }
aside { width: 165px; flex: none; }
.box { border: solid #ccc; border-width: 2px 1px 0; border-bottom: 1px solid #ccc; }
.box + .box { border-top-width: 1px; }
.box + .last { border-top: 2px solid #ccc; }
h3 { height: 15px; background: linear-gradient(#cf8989, #a23e3e 45%, #963434 55%, #d08a8a); color: #fff; font: bold 8.800px/14px "Noto Sans", sans-serif; padding-left: 15px; position: relative; }
h3::before { content: ""; position: absolute; left: 5px; top: 2px; width: 6px; height: 9px; background: radial-gradient(circle, #dcb0b0 .6px, transparent 1.100px) 0 0 / 3px 3px; }
.box ul { list-style: none; font-size: 8.200px; color: #808080; border-top: 1px solid #ddd; }
.box li { height: 27px; display: grid; align-items: center; white-space: nowrap; }
.box em { font-style: normal; text-align: right; }
.box a { color: #777; justify-self: start; margin-left: 9px; line-height: 9px; border-bottom: 1px solid #2d5c7c; }
.box li b { margin-left: 9px; }
.box .s { width: 16px; height: 18px; margin-left: 6px; margin-top: -3px; }
.caso { height: 208px; padding-top: 1px; }
.box .caso li { grid-template-columns: 26px 24px 1fr; }
.box li.total { height: 14px; font-size: 9px; font-weight: 700; color: #666; margin-top: -1px; }
.seg { height: 217px; }
.seg svg { width: 20px; height: 20px; margin-left: 3px; }
.seg .big { height: 24px; }
.box .seg li { grid-template-columns: 26px 22px 1fr; }
.box .seg li.total { height: 17px; margin-top: 0; }
.exit { height: 20px; display: flex; align-items: center; gap: 9px; padding-left: 7px; font-size: 9px; color: #666; }
.content { width: 1184px; flex: none; padding-left: 2px; }
h1 { font-size: 10.300px; font-variant: small-caps; color: #0b7d7d; line-height: 14px; margin: 13px 0 11px 2px; }
.filters { height: 147px; border: 1px solid #ccc; border-width: 2px 1px 1px; }
.fgrid { display: flex; padding-top: 3px; }
.fcol { display: grid; grid-template-rows: 18px 21px 21px 21px 23px 21px; column-gap: 17px; align-items: start; }
.c1 { grid-template-columns: 96px 282px; }
.c2 { grid-template-columns: 82px 124px; }
.c3 { grid-template-columns: 83px 270px; }
.fcol > div { display: flex; }
.fcol label { font-size: 7.700px; line-height: 11px; font-weight: 700; color: #858585; text-align: right; margin-top: 2px; white-space: nowrap; }
.fcol label.up { margin-top: -1px; }
.fcol label.rut { width: 49px; padding-right: 14px; margin-top: 1px; }
.sel, .inp { display: block; height: 13px; border: 1px solid #d0d0d0; border-top-color: #767676; border-left-color: #767676; background: #fff; font-size: 8.300px; line-height: 12px; color: #606060; padding-left: 2px; position: relative; white-space: nowrap; flex: none; }
.sel::after { content: ""; position: absolute; right: 5px; top: 2px; border: 3.500px solid transparent; border-top: 6px solid #222; border-bottom: 0; }
.inp { height: 14px; }
.nudge { margin-left: 1px; }
.second { margin: -1px 0 0 11px; }
.nudge.caret { border-right: 1px solid #222; }
.date { width: 45px; margin-top: 1px; text-align: right; padding-right: 3px; }
.cal { width: 11px; height: 12px; margin: -1px 0 0 1px; }
.actions { height: 52px; display: flex; align-items: center; padding: 0 0 6px 8px; }
.actions button { width: 86px; height: 18px; padding: 0; border: 1px solid #3a1010; border-radius: 3px; background: linear-gradient(90deg, #963434 78px, #fff 78px, #fff 79px, #963434 79px); color: #fff; font: bold 7.900px Lato, sans-serif; margin-right: 25px; white-space: nowrap; }
.act { display: flex; align-items: center; gap: 3px; font-size: 10px; font-weight: 700; color: #40668f; width: 81px; white-space: nowrap; margin-top: -3px; }
table { width: 1173px; margin-left: 3px; table-layout: fixed; border-collapse: separate; border-spacing: 0; font-size: 8.200px; line-height: 11px; color: #808080; }
th { height: 18px; padding: 0 0 0 6px; text-align: left; background: linear-gradient(#e9b9b9, #d78f8f 60%, #e6b3b3); color: #fff; border-right: 1px solid #fff; border-bottom: 2px solid #f6eaea; font-size: 8.200px; white-space: nowrap; }
th.r { text-align: right; padding: 0 3px 0 0; }
td { height: 25px; padding: 0; text-indent: 3.500px; border-right: 1px solid #fff; border-bottom: 1px solid #fff; background: #f0f0f0; white-space: nowrap; }
td:nth-child(n+9):nth-child(-n+13), td:nth-child(n+18) { letter-spacing: -.38px; font-size: 8.300px; }
tr:nth-child(even) td { background: #e4e4e4; }
td.r { text-align: right; text-indent: 0; letter-spacing: -.1px; }
td:nth-child(2) { letter-spacing: -.2px; }
td a { display: inline-block; line-height: 9px; color: #666; border-bottom: 1px solid #2d5c7c; }
.lens { width: 12px; height: 12px; margin: -2px 0 0 5px; }
.vscroll { width: 17px; background: #f1f1f1; display: flex; flex-direction: column; flex: none; }
.vscroll i { width: 13px; height: 452px; margin: 0 2px auto; background: #c1c1c1; }
.hscroll { height: 17px; background: #f1f1f1; display: flex; flex: none; }
.hscroll i { width: 1314px; margin: 2px 1px 2px 0; background: #c1c1c1; }
.hscroll u { width: 17px; background: #dcdcdc; }

/* taskbar */
.taskbar { height: 40px; background: linear-gradient(90deg, #2a2d31, #303135 40%, #26282c 75%, #212327); display: flex; color: #fff; font-family: "Open Sans", sans-serif; flex: none; }
.taskbar > span { width: 49px; padding-right: 1px; display: flex; align-items: center; justify-content: center; }
.taskbar > .w48 { width: 48px; padding: 0; }
.taskbar > .w51 { width: 51px; padding-right: 2px; }
.taskbar > .run { background: linear-gradient(#76b9ed, #76b9ed) 4px 38px / 40px 2px no-repeat; }
.taskbar > .split { background: linear-gradient(90deg, #76b9ed 32px, #4f7ea6 32px) 4px 38px / 40px 2px no-repeat; }
.taskbar > .on { background: linear-gradient(#76b9ed, #76b9ed) 0 38px / 48px 2px no-repeat, linear-gradient(#55585c, #55585c) 0 0 / 48px 40px no-repeat; margin-left: -1px; width: 50px; }
.tray { margin-left: auto; width: 366px; display: flex; align-items: center; padding-left: 8px; }
.tray > span { flex: none; }
.tray .esp { font-size: 12px; width: 28px; letter-spacing: -.6px; }
.clock { width: 70px; text-align: center; font-size: 11.800px; line-height: 18px; letter-spacing: -.45px; }
.notif { margin: 5px 0 0 11px; }

/* annotations laid over the desktop */
.note { position: absolute; left: 648px; top: -2px; width: 391px; height: 215px; border: 1px solid #1f497d; background: #fff; box-shadow: 4px 4px 5px rgba(0,0,0,.55); padding: 61px 2px 0 0; text-align: center; font: 16px/18px "Liberation Sans", sans-serif; color: #000; white-space: nowrap; letter-spacing: -.08px; }
.note span { letter-spacing: -.18px; }
.mark { position: absolute; border: 2px solid #c00000; filter: drop-shadow(5px 6px 2px rgba(0,0,0,.35)); }
.m1 { left: 589px; top: 283px; width: 188px; height: 63px; }
.m2 { left: 203px; top: 488px; width: 52px; height: 26px; }
.arrow { position: absolute; left: 760px; top: 160px; filter: drop-shadow(6px 4px 2px rgba(0,0,0,.35)); }
```
